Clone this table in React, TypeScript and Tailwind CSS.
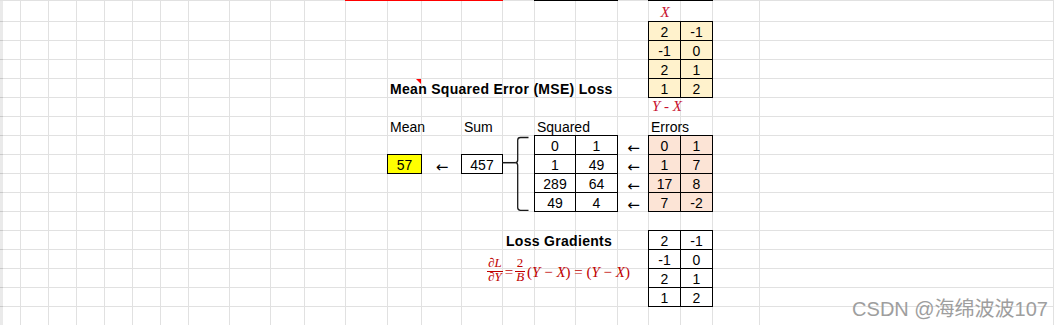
import React from "react";

// column / row tracks of the sheet (widths include the right/bottom gridline)
const COLS =
  "grid-cols-[3px_18px_28px_28px_28px_28px_28px_28px_41px_41px_34px_41px_42px_34px_40px_41px_32px_41px_42px_31px_32px_32px_47px_294px]";
const ROWS = "grid-rows-[1px_21px_repeat(16,19px)]";

type Cell = [string, string];

const xTable: Cell[] = [
  ["col-start-21 row-start-3", "2"],
  ["col-start-22 row-start-3", "-1"],
  ["col-start-21 row-start-4", "-1"],
  ["col-start-22 row-start-4", "0"],
  ["col-start-21 row-start-5", "2"],
  ["col-start-22 row-start-5", "1"],
  ["col-start-21 row-start-6", "1"],
  ["col-start-22 row-start-6", "2"],
];

const squared: Cell[] = [
  ["col-start-18 row-start-9", "0"],
  ["col-start-19 row-start-9", "1"],
  ["col-start-18 row-start-10", "1"],
  ["col-start-19 row-start-10", "49"],
  ["col-start-18 row-start-11", "289"],
  ["col-start-19 row-start-11", "64"],
  ["col-start-18 row-start-12", "49"],
  ["col-start-19 row-start-12", "4"],
];

const errors: Cell[] = [
  ["col-start-21 row-start-9", "0"],
  ["col-start-22 row-start-9", "1"],
  ["col-start-21 row-start-10", "1"],
  ["col-start-22 row-start-10", "7"],
  ["col-start-21 row-start-11", "17"],
  ["col-start-22 row-start-11", "8"],
  ["col-start-21 row-start-12", "7"],
  ["col-start-22 row-start-12", "-2"],
];

const gradients: Cell[] = [
  ["col-start-21 row-start-14", "2"],
  ["col-start-22 row-start-14", "-1"],
  ["col-start-21 row-start-15", "-1"],
  ["col-start-22 row-start-15", "0"],
  ["col-start-21 row-start-16", "2"],
  ["col-start-22 row-start-16", "1"],
  ["col-start-21 row-start-17", "1"],
  ["col-start-22 row-start-17", "2"],
];

const arrowRows = [
  "col-start-20 row-start-9",
  "col-start-20 row-start-10",
  "col-start-20 row-start-11",
  "col-start-20 row-start-12",
];

function SheetGrid() {
  const cells: React.ReactNode[] = [];
  for (let r = 0; r < 18; r++) {
    for (let c = 0; c < 24; c++) {
      let cls = "border-r border-b border-[#e1e1e1]";
      if (r === 0) cls = "bg-[#e1e1e1]";
      else if (c === 0) cls = "bg-[#eaeaea] border-b border-[#c9c9c9]";
      cells.push(<div key={`${r}-${c}`} className={cls} />);
    }
  }
  return <div className={`grid ${COLS} ${ROWS} col-start-1 row-start-1`}>{cells}</div>;
}

function Box({ pos, bg, children }: { pos: string; bg: string; children: React.ReactNode }) {
  return (
    <div className={`${pos} ${bg} -ml-px -mt-px border border-black flex justify-center items-start`}>
      <span className="pt-[2px] leading-[17px]">{children}</span>
    </div>
  );
}

function Label({ pos, children, className = "" }: { pos: string; children: React.ReactNode; className?: string }) {
  return (
    <div className={`${pos} whitespace-nowrap pl-[2px] pt-[2px] leading-[17px] ${className}`}>{children}</div>
  );
}

function Arrow({ pos }: { pos: string }) {
  return (
    <div className={`${pos} flex justify-center pt-[4px] leading-[17px] text-[15px] font-['DejaVu_Sans',sans-serif]`}>
      ←
    </div>
  );
}

function Frac({ num, den }: { num: React.ReactNode; den: React.ReactNode }) {
  return (
    <span className="inline-flex flex-col items-center text-[13px]">
      <span className="leading-[10px] mb-[3px] px-[1px]">{num}</span>
      <span className="h-px w-full bg-[#c00000]" />
      <span className="leading-[9px] px-[1px]">{den}</span>
    </span>
  );
}

export default function App() {
  return (
    <div className="relative grid w-[1054px] h-[325px] overflow-hidden bg-white text-black text-[14px] font-['Liberation_Sans',Arial,sans-serif]">
      <SheetGrid />

      <div className={`grid ${COLS} ${ROWS} col-start-1 row-start-1`}>
        {/* borders left over from the row above */}
        <div className="col-start-13 col-span-4 row-start-1 -ml-px bg-[#ff0000]" />
        <div className="col-start-18 col-span-2 row-start-1 -ml-px bg-black" />
        <div className="col-start-21 col-span-2 row-start-1 -ml-px bg-black" />

        <div className="col-start-21 row-start-2 flex justify-center pt-[3px] leading-[17px] italic text-[15px] text-[#c8102e] font-['Liberation_Serif',serif]">
          X
        </div>
        {xTable.map(([pos, v]) => (
          <Box key={pos} pos={pos} bg="bg-[#fff2cc]">{v}</Box>
        ))}

        <Label pos="col-start-14 row-start-6" className="font-bold tracking-[0.3px]">
          Mean Squared Error (MSE) Loss
        </Label>
        <div className="col-start-14 row-start-6 justify-self-end self-start mr-px w-0 h-0 border-t-[5px] border-t-[#ff0000] border-l-[5px] border-l-transparent" />

        <div className="col-start-21 col-span-2 row-start-7 whitespace-nowrap pl-[3px] leading-[17px] italic text-[#c8102e] font-['Liberation_Serif',serif] text-[15px]">
          Y - X
        </div>

        <Label pos="col-start-14 row-start-8">Mean</Label>
        <Label pos="col-start-16 row-start-8">Sum</Label>
        <Label pos="col-start-18 row-start-8">Squared</Label>
        <Label pos="col-start-21 row-start-8">Errors</Label>

        <Box pos="col-start-14 row-start-10" bg="bg-[#ffff00]">57</Box>
        <Arrow pos="col-start-15 row-start-10" />
        <Box pos="col-start-16 row-start-10" bg="bg-white">457</Box>

        <svg className="col-start-17 row-start-9 row-span-4 -mt-px -ml-px" width="33" height="77" viewBox="0 0 33 77">
          <path d="M0 27.7 H13.5" stroke="#1a1a1a" strokeWidth="1.5" fill="none" />
          <path
            d="M26.5 2.5 H18.5 Q15.7 2.5 15.7 5.3 V25 Q15.7 27.7 13.2 27.7 Q15.7 27.7 15.7 30.4 V72.5 Q15.7 75.3 18.5 75.3 H26.5"
            stroke="#1a1a1a"
            strokeWidth="1.3"
            fill="none"
          />
        </svg>

        {squared.map(([pos, v]) => (
          <Box key={pos} pos={pos} bg="bg-white">{v}</Box>
        ))}
        {arrowRows.map((pos) => (
          <Arrow key={pos} pos={pos} />
        ))}
        {errors.map(([pos, v]) => (
          <Box key={pos} pos={pos} bg="bg-[#fce4d6]">{v}</Box>
        ))}

        <Label pos="col-start-17 row-start-14" className="font-bold tracking-[0.3px] pl-[3px]">
          Loss Gradients
        </Label>

        {/* equation object */}
        <div className="col-start-16 col-span-5 row-start-15 row-span-2 pl-[25px] pt-[8px] flex items-start whitespace-nowrap text-[#c00000] font-['Liberation_Serif',serif]">
          <Frac num={<i>∂L</i>} den={<i>∂Y</i>} />
          <span className="mt-[7px] mx-[2px] text-[15px] leading-[15px]">=</span>
          <Frac num="2" den={<i>B</i>} />
          <span className="mt-[7px] ml-[2px] text-[15px] leading-[15px]">
            (<i>Y</i> − <i>X</i>) = (<i>Y</i> − <i>X</i>)
          </span>
        </div>

        {gradients.map(([pos, v]) => (
          <Box key={pos} pos={pos} bg="bg-white">{v}</Box>
        ))}
      </div>

      <div className="absolute right-[6px] top-[299px] text-[20px] leading-[20px] text-[#9e9e9e] whitespace-nowrap font-['Liberation_Sans','Noto_Sans_CJK_SC',sans-serif]">
        CSDN @海绵波波107
      </div>
    </div>
  );
}
